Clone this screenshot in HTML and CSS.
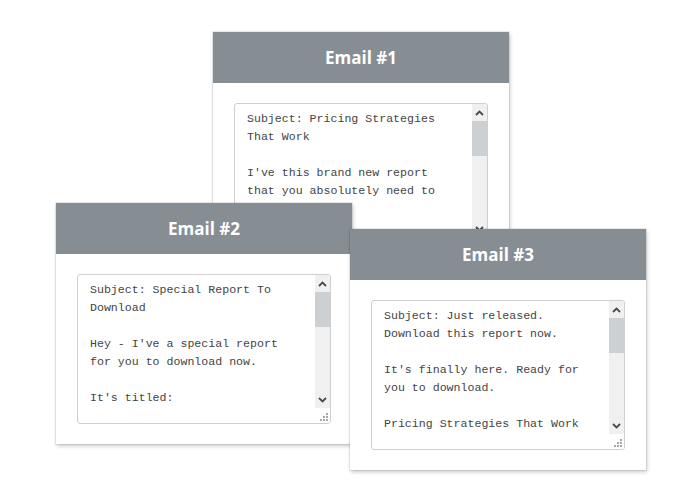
FILE: index.html
```html
<!DOCTYPE html>
<html lang="en">
<head>
    <meta charset="UTF-8">
    <meta name="viewport" content="width=device-width, initial-scale=1.0">
    <title>Email Sequence</title>
    <link rel="stylesheet" href="styles.css">
</head>
<body>

<div class="desk">
    <!-- Email 1 -->
    <div class="email-card card-one">
        <div class="email-head">Email #1</div>
        <div class="email-body">
            <div class="textbox">
                <textarea spellcheck="false">Subject: Pricing Strategies That Work

I've this brand new report that you absolutely need to read today.

It covers every pricing model that actually works for small online businesses.

Grab your copy here:
[LINK]

Talk soon,
[NAME]</textarea>
                <div class="scrollbar">
                    <div class="scroll-btn"><svg width="9" height="6" viewBox="0 0 9 6"><path d="M1 5 L4.5 1.5 L8 5" fill="none" stroke="#4a4a4a" stroke-width="1.8"/></svg></div>
                    <div class="scroll-thumb"></div>
                    <div class="scroll-track"></div>
                    <div class="scroll-btn"><svg width="9" height="6" viewBox="0 0 9 6"><path d="M1 1 L4.5 4.5 L8 1" fill="none" stroke="#4a4a4a" stroke-width="1.8"/></svg></div>
                    <div class="grip"><svg width="8" height="8" viewBox="0 0 8 8" fill="#a8a8a8"><rect x="6" y="0" width="2" height="2"/><rect x="3" y="3" width="2" height="2"/><rect x="6" y="3" width="2" height="2"/><rect x="0" y="6" width="2" height="2"/><rect x="3" y="6" width="2" height="2"/><rect x="6" y="6" width="2" height="2"/></svg></div>
                </div>
            </div>
        </div>
    </div>

    <!-- Email 2 -->
    <div class="email-card card-two">
        <div class="email-head">Email #2</div>
        <div class="email-body">
            <div class="textbox">
                <textarea spellcheck="false">Subject: Special Report To Download

Hey - I've a special report for you to download now.

It's titled:

Pricing Strategies That Work

Inside you'll learn how to set prices your customers are happy to pay.

Download it here:
[LINK]</textarea>
                <div class="scrollbar">
                    <div class="scroll-btn"><svg width="9" height="6" viewBox="0 0 9 6"><path d="M1 5 L4.5 1.5 L8 5" fill="none" stroke="#4a4a4a" stroke-width="1.8"/></svg></div>
                    <div class="scroll-thumb"></div>
                    <div class="scroll-track"></div>
                    <div class="scroll-btn"><svg width="9" height="6" viewBox="0 0 9 6"><path d="M1 1 L4.5 4.5 L8 1" fill="none" stroke="#4a4a4a" stroke-width="1.8"/></svg></div>
                    <div class="grip"><svg width="8" height="8" viewBox="0 0 8 8" fill="#a8a8a8"><rect x="6" y="0" width="2" height="2"/><rect x="3" y="3" width="2" height="2"/><rect x="6" y="3" width="2" height="2"/><rect x="0" y="6" width="2" height="2"/><rect x="3" y="6" width="2" height="2"/><rect x="6" y="6" width="2" height="2"/></svg></div>
                </div>
            </div>
        </div>
    </div>

    <!-- Email 3 -->
    <div class="email-card card-three">
        <div class="email-head">Email #3</div>
        <div class="email-body">
            <div class="textbox">
                <textarea spellcheck="false">Subject: Just released. Download this report now.

It's finally here. Ready for you to download.

Pricing Strategies That Work

It's packed with proven tactics you can use straight away.

Get it now:
[LINK]</textarea>
                <div class="scrollbar">
                    <div class="scroll-btn"><svg width="9" height="6" viewBox="0 0 9 6"><path d="M1 5 L4.5 1.5 L8 5" fill="none" stroke="#4a4a4a" stroke-width="1.8"/></svg></div>
                    <div class="scroll-thumb"></div>
                    <div class="scroll-track"></div>
                    <div class="scroll-btn"><svg width="9" height="6" viewBox="0 0 9 6"><path d="M1 1 L4.5 4.5 L8 1" fill="none" stroke="#4a4a4a" stroke-width="1.8"/></svg></div>
                    <div class="grip"><svg width="8" height="8" viewBox="0 0 8 8" fill="#a8a8a8"><rect x="6" y="0" width="2" height="2"/><rect x="3" y="3" width="2" height="2"/><rect x="6" y="3" width="2" height="2"/><rect x="0" y="6" width="2" height="2"/><rect x="3" y="6" width="2" height="2"/><rect x="6" y="6" width="2" height="2"/></svg></div>
                </div>
            </div>
        </div>
    </div>
</div>

</body>
</html>
```

FILE: styles.css
```css
body {
    margin: 0;
    padding: 0;
    background-color: #fff;
    font-family: "Open Sans", Arial, sans-serif;
}
.desk {
    position: relative;
    width: 700px;
    height: 500px;
}
.email-card {
    position: absolute;
    width: 296px;
    background-color: #fff;
    box-shadow: 0 0 0 1px rgba(0, 0, 0, 0.07), 1px 2px 4px rgba(0, 0, 0, 0.22);
}
.card-one {
    left: 213px;
    top: 32px;
}
.card-two {
    left: 56px;
    top: 203px;
}
.card-three {
    left: 350px;
    top: 229px;
}
.email-head {
    height: 51px;
    line-height: 51px;
    background-color: #868d93;
    color: #fff;
    font-size: 17px;
    font-weight: 700;
    text-align: center;
}
.email-body {
    padding: 20px 21px;
}
.textbox {
    display: flex;
    box-sizing: border-box;
    width: 254px;
    height: 150px;
    border: 1px solid #cfcfcf;
    border-radius: 3px;
    overflow: hidden;
    background-color: #fff;
}
.textbox textarea {
    flex: 1;
    min-width: 0;
    margin: 0;
    padding: 6px 10px 0 12px;
    border: none;
    resize: none;
    overflow: hidden;
    outline: none;
    font-family: "Liberation Mono", "Courier New", monospace;
    font-size: 11.6px;
    line-height: 18px;
    color: #444;
    background-color: transparent;
}
.scrollbar {
    display: flex;
    flex-direction: column;
    width: 15px;
}
.scroll-btn {
    display: flex;
    align-items: center;
    justify-content: center;
    height: 17px;
    background-color: #f0f0f0;
}
.scroll-thumb {
    height: 35px;
    background-color: #cdd0d3;
}
.scroll-track {
    flex: 1;
    background-color: #f0f0f0;
}
.grip {
    display: flex;
    align-items: flex-end;
    justify-content: flex-end;
    height: 15px;
    padding: 0 2px 2px 0;
    box-sizing: border-box;
    background-color: #fff;
}
```
